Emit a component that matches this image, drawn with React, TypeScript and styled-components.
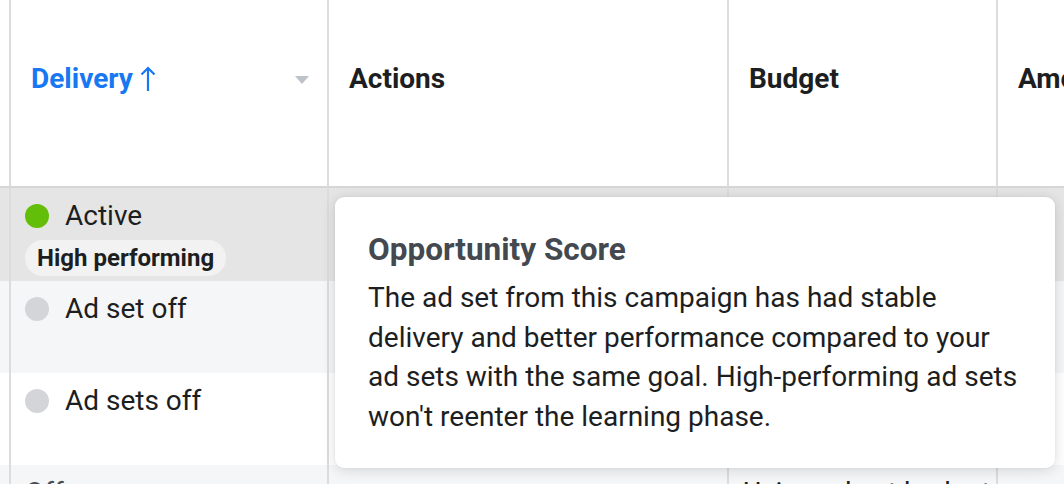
import React from "react";
import styled, { createGlobalStyle } from "styled-components";

const Global = createGlobalStyle`
  html, body { margin: 0; padding: 0; background: #fff; }
  body { width: 1064px; height: 484px; overflow: hidden; font-family: Roboto, "Liberation Sans", sans-serif; color: #1c1e21; }
`;

const Stage = styled.div`
  position: relative;
  width: 1064px;
  height: 484px;
  overflow: hidden;
`;

const Table = styled.div`
  display: grid;
  grid-template-columns: 9px 318px 400px 269px 300px;
  grid-template-rows: 188px 93px 92px 92px 92px;
  width: 1296px;
`;

const HeadCell = styled.div<{ $first?: boolean }>`
  border-left: ${(p) => (p.$first ? "none" : "2px solid #dcdcdc")};
  border-bottom: 2px solid #d6d6d6;
  padding: 63px 18px 0 20px;
  box-sizing: border-box;
  display: flex;
  align-items: flex-start;
  justify-content: space-between;
  font-size: 28px;
  font-weight: 700;
  line-height: 32px;
  white-space: nowrap;
  color: #1c1e21;
`;

const SortLabel = styled.span`
  color: #1877f2;
  display: inline-flex;
  align-items: center;
  gap: 7px;
`;

const Caret = styled.span`
  margin-top: 13px;
  width: 0;
  height: 0;
  border-left: 7px solid transparent;
  border-right: 7px solid transparent;
  border-top: 8px solid #bec3c9;
`;

const Cell = styled.div<{ $bg: string; $first?: boolean }>`
  background: ${(p) => p.$bg};
  border-left: ${(p) => (p.$first ? "none" : "2px solid #dcdcdc")};
  box-sizing: border-box;
  padding: 12px 14px 0 14px;
  font-size: 28px;
  line-height: 32px;
  white-space: nowrap;
  color: #1c1e21;
`;

const Status = styled.div`
  display: flex;
  align-items: center;
  gap: 16px;
`;

const Dot = styled.span<{ $color: string }>`
  width: 24px;
  height: 24px;
  border-radius: 50%;
  background: ${(p) => p.$color};
  flex: none;
`;

const Pill = styled.span`
  display: inline-block;
  margin-top: 8px;
  padding: 2px 12px;
  border-radius: 18px;
  background: #f2f2f2;
  font-size: 24px;
  font-weight: 700;
  line-height: 32px;
  color: #1c1e21;
`;

const CellText = styled.div<{ $muted?: boolean }>`
  color: ${(p) => (p.$muted ? "#4b4f56" : "#1c1e21")};
`;

const Tooltip = styled.div`
  position: absolute;
  left: 335px;
  top: 197px;
  width: 720px;
  height: 271px;
  box-sizing: border-box;
  background: #fff;
  border-radius: 9px;
  box-shadow: 0 2px 14px rgba(0, 0, 0, 0.14), 0 0 2px rgba(0, 0, 0, 0.08);
  padding: 33px 20px 0 33px;
`;

const TipTitle = styled.div`
  font-size: 31.5px;
  font-weight: 700;
  line-height: 40px;
  color: #444950;
  margin-bottom: 8px;
`;

const TipBody = styled.div`
  font-size: 28px;
  line-height: 39.5px;
  color: #1c1e21;
  white-space: nowrap;
`;

const rows = [
  { bg: "#e5e5e5", dot: "#63be09", label: "Active", pill: true },
  { bg: "#f5f6f7", dot: "#d3d5d8", label: "Ad set off" },
  { bg: "#ffffff", dot: "#d3d5d8", label: "Ad sets off" },
];

const tipLines = [
  "The ad set from this campaign has had stable",
  "delivery and better performance compared to your",
  "ad sets with the same goal. High-performing ad sets",
  "won't reenter the learning phase.",
];

export default function App() {
  return (
    <Stage>
      <Global />
      <Table>
        <HeadCell $first />
        <HeadCell>
          <SortLabel>
            Delivery
            <svg width="16" height="26" viewBox="0 0 16 26" fill="none" stroke="#1877f2" strokeWidth="2.2">
              <path d="M8 25V2M1.5 8.5L8 2l6.5 6.5" />
            </svg>
          </SortLabel>
          <Caret />
        </HeadCell>
        <HeadCell>Actions</HeadCell>
        <HeadCell>Budget</HeadCell>
        <HeadCell>Amount spent</HeadCell>

        {rows.map((r) => (
          <React.Fragment key={r.label}>
            <Cell $bg={r.bg} $first />
            <Cell $bg={r.bg}>
              <Status>
                <Dot $color={r.dot} />
                {r.label}
              </Status>
              {r.pill && <Pill>High performing</Pill>}
            </Cell>
            <Cell $bg={r.bg} />
            <Cell $bg={r.bg} />
            <Cell $bg={r.bg} />
          </React.Fragment>
        ))}

        <Cell $bg="#f5f6f7" $first />
        <Cell $bg="#f5f6f7">
          <CellText $muted>Off</CellText>
        </Cell>
        <Cell $bg="#f5f6f7" />
        <Cell $bg="#f5f6f7">
          <CellText>Using ad set budget</CellText>
        </Cell>
        <Cell $bg="#f5f6f7" />
      </Table>

      <Tooltip>
        <TipTitle>Opportunity Score</TipTitle>
        <TipBody>
          {tipLines.map((l, i) => (
            <React.Fragment key={i}>
              {l}
              {i < tipLines.length - 1 && <br />}
            </React.Fragment>
          ))}
        </TipBody>
      </Tooltip>
    </Stage>
  );
}
